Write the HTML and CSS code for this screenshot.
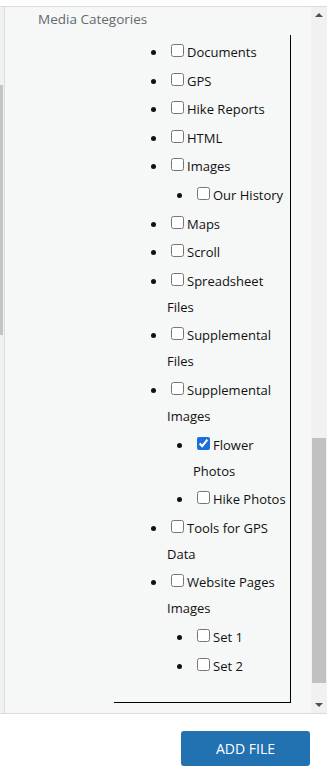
FILE: index.html
```html
<!DOCTYPE html>
<html lang="en">

<head>
    <meta charset="UTF-8">
    <meta name="viewport" content="width=device-width, initial-scale=1.0">
    <title>Media Categories</title>
    <link rel="stylesheet" href="styles.css">
</head>

<body>
    <div id="panel">
        <div class="edge">
            <div class="edge-thumb"></div>
        </div>

        <div class="content">
            <div class="heading">Media Categories</div>

            <div class="catbox">
                <ul class="cats">
                    <li><label><input type="checkbox">Documents</label></li>
                    <li><label><input type="checkbox">GPS</label></li>
                    <li><label><input type="checkbox">Hike Reports</label></li>
                    <li><label><input type="checkbox">HTML</label></li>
                    <li><label><input type="checkbox">Images</label>
                        <ul class="children">
                            <li><label><input type="checkbox">Our History</label></li>
                        </ul>
                    </li>
                    <li><label><input type="checkbox">Maps</label></li>
                    <li><label><input type="checkbox">Scroll</label></li>
                    <li><label><input type="checkbox">Spreadsheet Files</label></li>
                    <li><label><input type="checkbox">Supplemental Files</label></li>
                    <li><label><input type="checkbox">Supplemental Images</label>
                        <ul class="children">
                            <li><label><input type="checkbox" checked>Flower Photos</label></li>
                            <li><label><input type="checkbox">Hike Photos</label></li>
                        </ul>
                    </li>
                    <li><label><input type="checkbox">Tools for GPS Data</label></li>
                    <li><label><input type="checkbox">Website Pages Images</label>
                        <ul class="children">
                            <li><label><input type="checkbox">Set 1</label></li>
                            <li><label><input type="checkbox">Set 2</label></li>
                        </ul>
                    </li>
                </ul>
            </div>
        </div>

        <div class="scrollbar">
            <div class="arrow up"></div>
            <div class="track">
                <div class="thumb"></div>
            </div>
            <div class="arrow down"></div>
        </div>
    </div>

    <div class="footer">
        <div id="addBtn">ADD FILE</div>
    </div>
</body>

</html>
```

FILE: styles.css
```css
* {
    box-sizing: border-box;
}

body {
    margin: 0;
    background: #fff;
    font-family: "Open Sans", "Noto Sans", sans-serif;
}

#panel {
    display: flex;
    height: 708px;
    margin-top: 6px;
    border-top: 1px solid #dcdcde;
    border-bottom: 1px solid #dcdcde;
}

.edge {
    flex: none;
    width: 5px;
    background: #f1f1f1;
    border-right: 1px solid #dcdcde;
}

.edge-thumb {
    width: 3px;
    height: 250px;
    margin-top: 78px;
    background: #c4c4c4;
}

.content {
    flex: 1;
    background: #f6f7f7;
    overflow: hidden;
}

.heading {
    padding: 2px 0 0 33px;
    font-size: 13.5px;
    line-height: 20px;
    color: #646970;
}

.catbox {
    height: 668px;
    margin: 6px 20px 0 109px;
    border-right: 1px solid #000;
    border-bottom: 1px solid #000;
    padding-top: 1.5px;
    overflow: hidden;
}

.cats {
    margin: 0;
    padding-left: 53px;
    font-size: 13px;
    line-height: 26px;
    color: #111;
    list-style: disc;
}

.cats li {
    margin-top: 2.6px;
}

.children {
    margin: 0;
    padding-left: 26px;
    list-style: disc;
}

.cats input {
    width: 13px;
    height: 13px;
    margin: 0 3px 0 4px;
    vertical-align: 0;
    accent-color: #1a6fd8;
}

.scrollbar {
    width: 16px;
    flex: none;
    display: flex;
    flex-direction: column;
    background: #f1f1f1;
}

.arrow {
    height: 17px;
    position: relative;
}

.arrow::after {
    content: "";
    position: absolute;
    left: 4px;
    border-left: 4px solid transparent;
    border-right: 4px solid transparent;
}

.up::after {
    top: 6px;
    border-bottom: 4px solid #505050;
}

.down::after {
    top: 7px;
    border-top: 4px solid #505050;
}

.track {
    flex: 1;
    display: flex;
    flex-direction: column;
    justify-content: flex-end;
}

.thumb {
    height: 245px;
    margin: 0 1px 13px 1px;
    background: #c1c1c1;
}

.footer {
    display: flex;
    justify-content: flex-end;
    padding: 17px 17px 0 0;
}

#addBtn {
    width: 129px;
    height: 35px;
    line-height: 35px;
    text-align: center;
    font-size: 14px;
    color: #fff;
    background: #2271b1;
    border-radius: 3px;
}
```
